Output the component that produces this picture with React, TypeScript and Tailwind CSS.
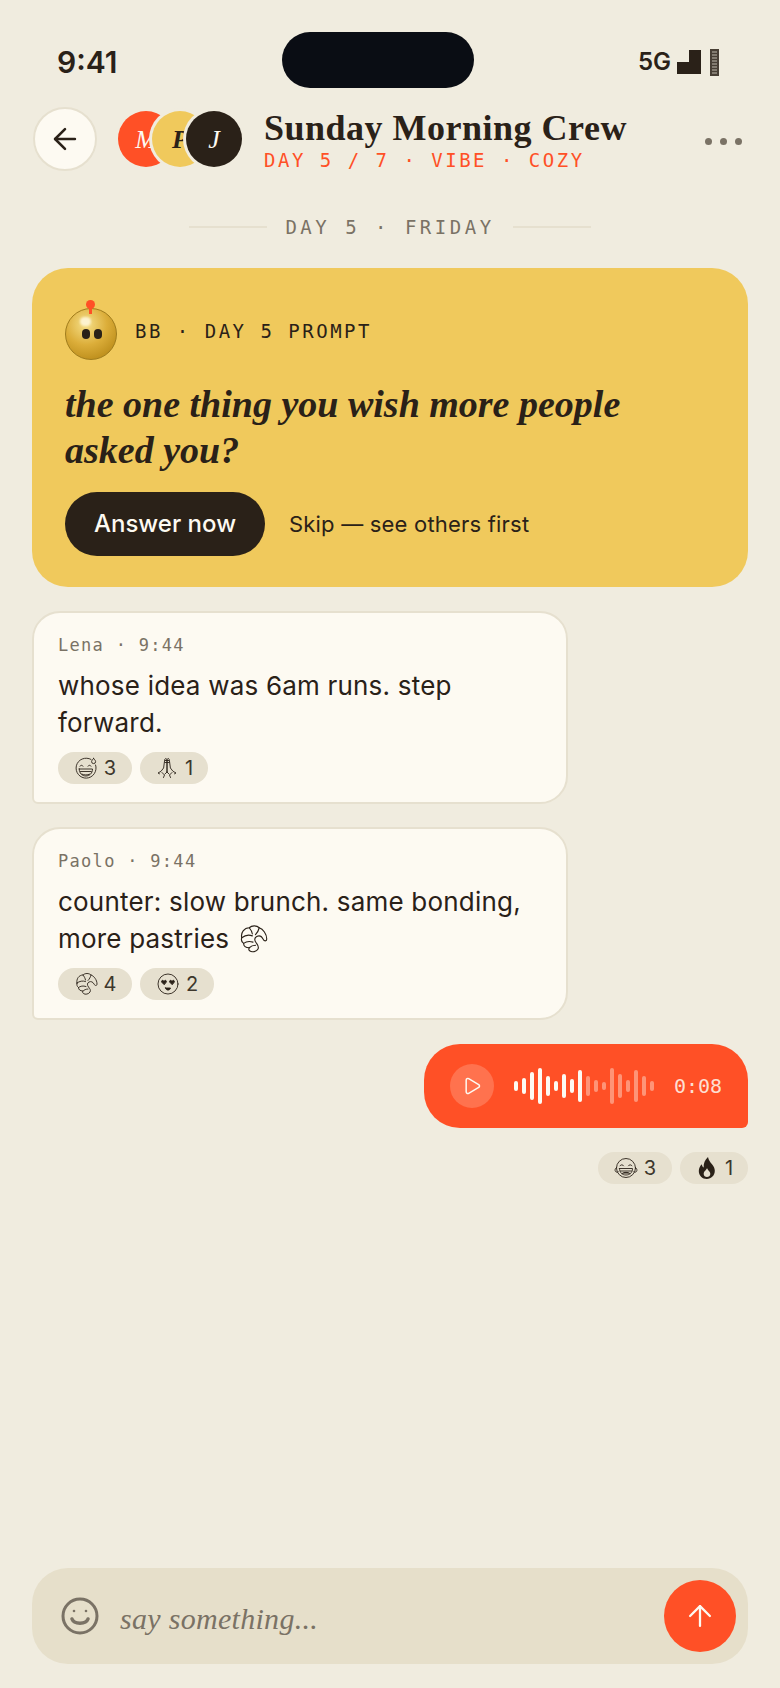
import React from 'react'
import { ArrowLeft, ArrowUp, Play } from 'lucide-react'

const sans = "font-['Inter','Noto_Sans',sans-serif]"
const serif = "font-['Liberation_Serif',serif]"
const mono = "font-['DejaVu_Sans_Mono',monospace]"

const wave = [10, 16, 28, 36, 20, 10, 24, 14, 32, 20, 12, 8, 36, 24, 12, 32, 20, 10]

function GrinSweat() {
  return (
    <svg width="24" height="24" viewBox="0 0 24 24" fill="none" stroke="#2a2118" strokeWidth="0.9" strokeLinecap="round" strokeLinejoin="round">
      <path d="M17 3.400A10 10 0 1 0 21.600 9" />
      <path d="M19.600 2.400c1.100 1.300 2 2.300 2 3.200a2 2 0 0 1-4 0c0-.9.900-1.900 2-3.200z" />
      <path d="M6 10.200c.6-1.300 2.400-1.300 3 0M14 10.200c.6-1.300 2.400-1.300 3 0" />
      <path d="M5.200 13h13.300c0 4.300-3 7-6.650 7S5.200 17.300 5.200 13z" />
      <path d="M6.500 15.500h10.700M8 18.200c2.300 1 5.300 1 7.600 0" />
    </svg>
  )
}

function PrayHands() {
  return (
    <svg width="24" height="24" viewBox="0 0 24 24" fill="none" stroke="#2a2118" strokeWidth="0.9" strokeLinecap="round" strokeLinejoin="round">
      <path d="M12 16V4.500c0-1.300.6-2 1.200-2s1.200.7 1.200 2l1 7.500 2.600 3.300 3 1.700-1.500.8" />
      <path d="M12 16V4.500c0-1.300-.6-2-1.200-2s-1.200.7-1.200 2l-1 7.500-2.600 3.300-3 1.700 1.500.8" />
      <path d="M10 4.500h4M10 6.500h4M7 16.500l2.500 2.500-1 2.500M17 16.500 14.500 19l1 2.500M12 16l-2 2M12 16l2 2" />
    </svg>
  )
}

function Croissant({ size = 24 }: { size?: number }) {
  return (
    <svg width={size} height={size} viewBox="0 0 24 24" fill="none" stroke="#2a2118" strokeWidth="0.9" strokeLinecap="round" strokeLinejoin="round">
      <path d="M3 11C2 7 5 3 9 3c2-2 6-2 8 0 3 1 6 5 6 9 0 2-2 2-3 0-1-2-3-3-5-2-2 1-2 3-.5 5 1.500 2 2.500 3 1.500 5-1 2-5 3-6.500 1.500-1-.5-1-1.500-.5-2.500-3 0-4.500-1.500-4.500-3.500C3 14.500 2.500 12.500 3 11z" />
      <path d="M9 3c1.200 1.400 2.200 3.200 2.500 5M17 3c-.5 2-1.500 4-3 5.500M3 11c2.500-2 6-2.500 8.500-1.500M4.500 15.500c2-1.500 4.500-2 7.500-1M9 19c1-1 3-2 5-2" />
    </svg>
  )
}

function HeartEyes() {
  return (
    <svg width="24" height="24" viewBox="0 0 24 24" fill="none" stroke="#2a2118" strokeWidth="0.9" strokeLinecap="round" strokeLinejoin="round">
      <circle cx="12" cy="12" r="10" />
      <path d="M8 12.500 5.800 10.300c-.9-1.100.5-2.500 1.500-1.700.3.200.5.400.7.700.2-.3.400-.5.700-.7 1-.8 2.400.6 1.500 1.700z" fill="#2a2118" />
      <path d="m16 12.500-2.200-2.200c-.9-1.100.5-2.500 1.500-1.700.3.200.5.400.7.700.2-.3.400-.5.700-.7 1-.8 2.400.6 1.500 1.700z" fill="#2a2118" />
      <path d="M9.500 16h5c-.4 1.400-1.300 2.100-2.500 2.100s-2.100-.7-2.500-2.100z" fill="#2a2118" />
    </svg>
  )
}

function Joy() {
  return (
    <svg width="24" height="24" viewBox="0 0 24 24" fill="none" stroke="#2a2118" strokeWidth="0.9" strokeLinecap="round" strokeLinejoin="round">
      <circle cx="12" cy="12" r="9.500" />
      <path d="M2.600 11.500c-2 1-2 3.800-.4 4.500.9.400 1.700 0 2.200-.6M21.400 11.500c2 1 2 3.800.4 4.500-.9.400-1.700 0-2.200-.6" />
      <path d="M6 9.800c.8-1.400 2.800-1.400 3.600 0M14.400 9.800c.8-1.400 2.800-1.400 3.600 0" />
      <path d="M5.500 12.500h13c0 4.200-2.800 6.500-6.500 6.500s-6.500-2.300-6.500-6.500z" />
      <path d="M6.600 15h10.800" />
      <path d="M8 17.500c2.400-1.600 5.600-1.600 8 0" fill="#2a2118" />
    </svg>
  )
}

function Flame() {
  return (
    <svg width="24" height="24" viewBox="0 0 24 24" fill="#2a2118">
      <path fillRule="evenodd" d="M13 1c.6 3.500 2.300 5 4 7.200 1.600 2 2.800 4 2.800 6.600 0 4.700-3.500 8.200-8 8.200s-8-3.400-8-8c0-2.800 1.300-5 3-6.700.2 1.500.8 2.700 1.900 3.300C8.300 7.500 10 3.500 13 1zm-1 11c-.3 2-3.300 3-3.300 6 0 1.900 1.500 3 3.300 3s3.300-1.200 3.300-3c0-2.700-2.700-3.500-3.300-6z" />
    </svg>
  )
}

function Chip({ icon, count, wide = false }: { icon: React.ReactNode; count: number; wide?: boolean }) {
  return (
    <div className={`h-8 rounded-full bg-[#e6e0cf] flex items-center justify-center gap-[6px] text-[20px] text-[#3d372c] ${sans} ${wide ? 'w-[74px]' : 'w-[68px]'}`}>
      {icon}
      <span>{count}</span>
    </div>
  )
}

function Bubble({ who, children, chips }: { who: string; children: React.ReactNode; chips: React.ReactNode }) {
  return (
    <div className="w-[536px] h-[193px] rounded-[28px] rounded-bl-[6px] bg-[#fdfaf2] border-2 border-[#e6e0cf] pt-[21px] pl-[24px] pr-[20px]">
      <div className={`${mono} text-[17px] leading-[22px] tracking-[1.300px] text-[#7a7265]`}>{who} · 9:44</div>
      <div className={`${sans} text-[26px] leading-[37px] tracking-[0.200px] mt-[11px] text-[#2a2118]`}>{children}</div>
      <div className="flex gap-2 mt-[11px]">{chips}</div>
    </div>
  )
}

export default function App() {
  return (
    <div className={`w-[780px] h-[1688px] bg-[#f0ecdf] flex flex-col overflow-hidden ${sans}`}>
      {/* status bar */}
      <div className="h-[88px] pt-[32px] pl-[57px] flex items-start shrink-0">
        <div className="w-[225px] text-[30px] leading-[60px] font-semibold text-[#2a2118]">9:41</div>
        <div className="w-[192px] h-[56px] rounded-[28px] bg-[#0a0d14]" />
        <div className="w-[245px] h-[60px] flex items-center justify-end gap-[6px]">
          <span className="text-[24px] font-semibold text-[#2a2118]">5G</span>
          <svg width="24" height="24" viewBox="0 0 24 24" fill="#2a2118">
            <path d="M0 24V12h12V0h12v24z" />
          </svg>
          <svg className="ml-[3px]" width="9" height="27" viewBox="0 0 9 27">
            <rect width="9" height="27" fill="#2a2118" opacity="0.85" />
            <path d="M2 3h5M2 6h5M2 9h5M2 12h5M2 15h5M2 18h5M2 21h5M2 24h5" stroke="#f0ecdf" strokeWidth="1" opacity="0.7" />
          </svg>
        </div>
      </div>

      {/* header */}
      <div className="h-[64px] mt-[19px] pl-[33px] pr-[38px] flex items-center shrink-0">
        <div className="w-16 h-16 rounded-full bg-[#fdfaf2] border-2 border-[#e6e0cf] flex items-center justify-center">
          <ArrowLeft size={34} color="#2a2118" strokeWidth={1.800} />
        </div>
        <div className={`flex ml-[21px] ${serif} italic text-[26px]`}>
          <div className="w-14 h-14 rounded-full bg-[#ff5026] text-[#fdfaf2] flex items-center justify-center">M</div>
          <div className="w-14 h-14 rounded-full bg-[#f0c95c] text-[#2a2118] font-bold ml-[-22px] ring-[3px] ring-[#f0ecdf] flex items-center justify-center">P</div>
          <div className="w-14 h-14 rounded-full bg-[#2a2118] text-[#fdfaf2] ml-[-22px] ring-[3px] ring-[#f0ecdf] flex items-center justify-center">J</div>
        </div>
        <div className="ml-[22px] flex-1">
          <div className={`${serif} font-bold text-[36px] leading-[40px] text-[#2a2118] tracking-[0.500px]`}>Sunday Morning Crew</div>
          <div className={`${mono} text-[19px] leading-[22px] tracking-[2.500px] text-[#ff5026] mt-[1px]`}>DAY 5 / 7 · VIBE · COZY</div>
        </div>
        <div className="flex gap-[8px] mt-[5px]">
          <div className="w-[7px] h-[7px] rounded-full bg-[#7a7265]" />
          <div className="w-[7px] h-[7px] rounded-full bg-[#7a7265]" />
          <div className="w-[7px] h-[7px] rounded-full bg-[#7a7265]" />
        </div>
      </div>

      {/* date */}
      <div className="mt-[45px] h-[22px] flex items-center justify-center gap-[18px] shrink-0">
        <div className="w-[78px] h-[2px] bg-[#e6e0cf]" />
        <div className={`${mono} text-[19px] tracking-[3.500px] text-[#7a7265]`}>DAY 5 · FRIDAY</div>
        <div className="w-[78px] h-[2px] bg-[#e6e0cf]" />
      </div>

      {/* feed */}
      <div className="flex flex-col px-[32px] mt-[30px] flex-1">
        <div className="h-[319px] rounded-[36px] bg-[#f0c95c] pl-[33px] pt-[40px]">
          <div className="flex items-center gap-[18px]">
            <div className="relative w-[52px] h-[52px] rounded-full border border-[#a07c1c] bg-[radial-gradient(circle_at_40%_30%,#f6e08a_0%,#dcae3a_45%,#b98a18_85%,#c89a2a_100%)]">
              <div className="absolute left-[14px] top-[8px] w-[11px] h-[9px] rounded-full bg-[#fdf3cf] blur-[1px]" />
              <div className="absolute left-[20px] top-[-9px] w-[9px] h-[9px] rounded-full bg-[#ff5026]" />
              <div className="absolute left-[23px] top-[-2px] w-[3px] h-[7px] bg-[#ff5026]" />
              <div className="absolute left-[16px] top-[20px] w-[8px] h-[10px] rounded-full bg-[#2a2118]" />
              <div className="absolute left-[28px] top-[20px] w-[8px] h-[10px] rounded-full bg-[#2a2118]" />
            </div>
            <div className={`${mono} text-[19px] tracking-[2.500px] text-[#2a2118] mt-[-6px]`}>BB · DAY 5 PROMPT</div>
          </div>
          <div className={`${serif} italic font-bold text-[38px] leading-[46px] text-[#2a2118] mt-[21px]`}>
            the one thing you wish more people
            <br />
            asked you?
          </div>
          <div className="flex items-center mt-[19px]">
            <div className="w-[200px] h-[64px] rounded-full bg-[#2a2118] text-[#fdfaf2] text-[24px] font-medium flex items-center justify-center">Answer now</div>
            <div className="ml-[24px] text-[22px] tracking-[0.200px] text-[#2a2118]">Skip — see others first</div>
          </div>
        </div>

        <div className="mt-[24px]">
          <Bubble
            who="Lena"
            chips={
              <>
                <Chip wide icon={<GrinSweat />} count={3} />
                <Chip icon={<PrayHands />} count={1} />
              </>
            }
          >
            whose idea was 6am runs. step
            <br />
            forward.
          </Bubble>
        </div>

        <div className="mt-[23px]">
          <Bubble
            who="Paolo"
            chips={
              <>
                <Chip wide icon={<Croissant />} count={4} />
                <Chip wide icon={<HeartEyes />} count={2} />
              </>
            }
          >
            counter: slow brunch. same bonding,
            <br />
            <span className="inline-flex items-center gap-[9px]">
              more pastries <Croissant size={30} />
            </span>
          </Bubble>
        </div>

        <div className="mt-[24px] self-end w-[324px] h-[84px] rounded-[36px] rounded-br-[6px] bg-[#ff5026] flex items-center pl-[26px]">
          <div className="w-[44px] h-[44px] rounded-full bg-[#fdfaf2]/20 flex items-center justify-center">
            <Play size={20} color="#fdfaf2" strokeWidth={1.800} />
          </div>
          <div className="flex items-center gap-[4px] ml-[20px]">
            {wave.map((h, i) => (
              <div
                key={i}
                className={`w-[4px] rounded-full ${i < 9 ? 'bg-[#fdfaf2]' : 'bg-[#fdfaf2]/40'}`}
                style={{ height: h }}
              />
            ))}
          </div>
          <div className={`${mono} text-[20px] text-[#fdfaf2]/85 ml-[20px]`}>0:08</div>
        </div>

        <div className="mt-[24px] self-end flex gap-2">
          <Chip wide icon={<Joy />} count={3} />
          <Chip icon={<Flame />} count={1} />
        </div>

        {/* composer */}
        <div className="mt-auto mb-[24px] h-[96px] rounded-[36px] bg-[#e6dfca] flex items-center pl-[29px] pr-[12px]">
          <svg width="38" height="38" viewBox="0 0 38 38" fill="none" stroke="#7a7265" strokeWidth="3" strokeLinecap="round">
            <circle cx="19" cy="19" r="17" />
            <path d="M11 22c2 5.500 14 5.500 16 0" strokeWidth="3.500" />
            <circle cx="13" cy="14" r="1.300" fill="#7a7265" stroke="none" />
            <circle cx="25" cy="14" r="1.300" fill="#7a7265" stroke="none" />
          </svg>
          <div className={`${serif} italic text-[30px] tracking-[0.300px] text-[#7a7265] ml-[21px] mt-[4px] flex-1`}>say something...</div>
          <div className="w-[72px] h-[72px] rounded-full bg-[#ff5026] flex items-center justify-center">
            <ArrowUp size={34} color="#fdfaf2" strokeWidth={1.600} />
          </div>
        </div>
      </div>
    </div>
  )
}
